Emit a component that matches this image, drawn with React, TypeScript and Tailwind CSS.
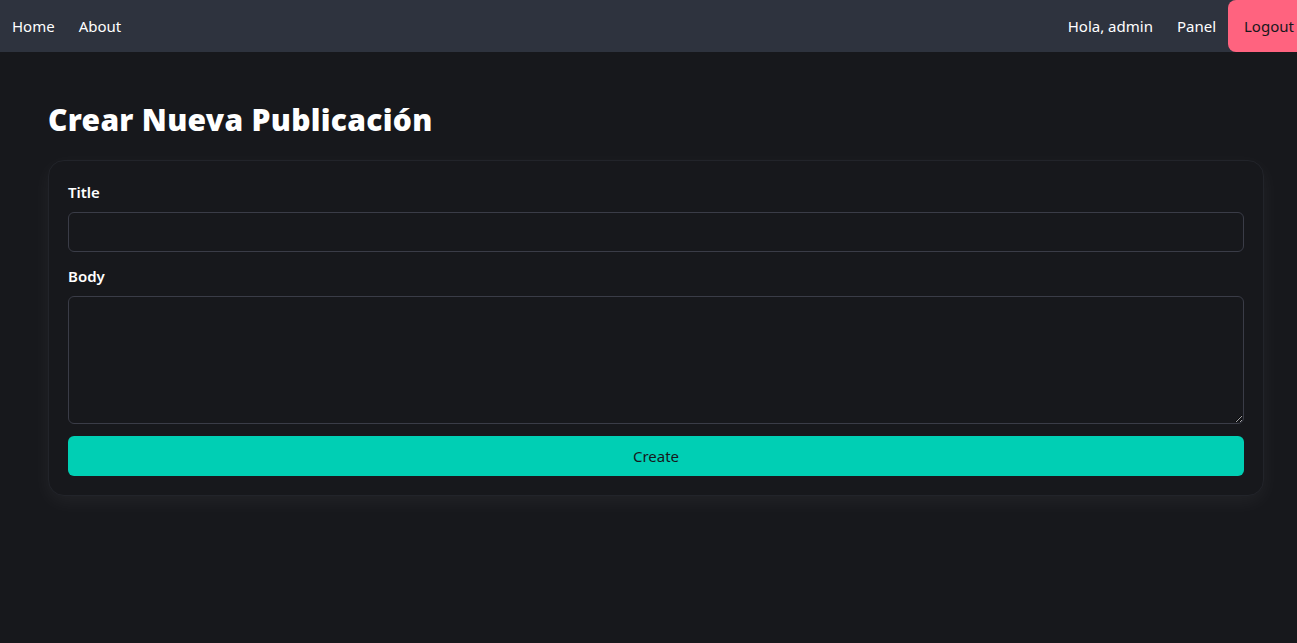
const App = () => {
  return (
    <div className="min-h-screen w-full overflow-hidden bg-[#17181c] text-white font-['Noto_Sans',sans-serif]">
      <nav className="flex h-[52px] items-center justify-between bg-[#2e333e]">
        <ul className="flex items-center gap-6 ps-3 text-[15px]">
          <li>Home</li>
          <li>About</li>
        </ul>
        <ul className="flex h-full items-center text-[15px]">
          <li className="pe-6">Hola, admin</li>
          <li className="pe-3">Panel</li>
          <li className="flex h-full items-center rounded-s-lg bg-[#ff637f] ps-4 pe-3 text-[#17181c] whitespace-nowrap w-[69px]">
            Logout
          </li>
        </ul>
      </nav>

      <main className="ps-12 pe-[33px] pt-[50px]">
        <h1 className="text-[30px] leading-9 font-black tracking-[0.3px]">Crear Nueva Publicación</h1>

        <form className="mt-[22px] rounded-2xl border border-[#22242a] bg-[#17181c] p-[19px] shadow-[0_6px_20px_rgba(255,255,255,0.05)]">
          <label className="mb-2 block text-[15px] leading-6 font-semibold">Title</label>
          <input
            type="text"
            className="block h-10 w-full rounded-md border border-[#3a3c47] bg-[#17181c] px-3 outline-none"
          />
          <label className="mt-3 mb-2 block text-[15px] leading-6 font-semibold">Body</label>
          <textarea className="block h-32 w-full rounded-md border border-[#3a3c47] bg-[#17181c] px-3 py-2 outline-none" />
          <button
            type="button"
            className="mt-3 h-10 w-full rounded-md bg-[#00cfb4] text-[15px] text-[#17181c]"
          >
            Create
          </button>
        </form>
      </main>
    </div>
  );
};

export default App;
